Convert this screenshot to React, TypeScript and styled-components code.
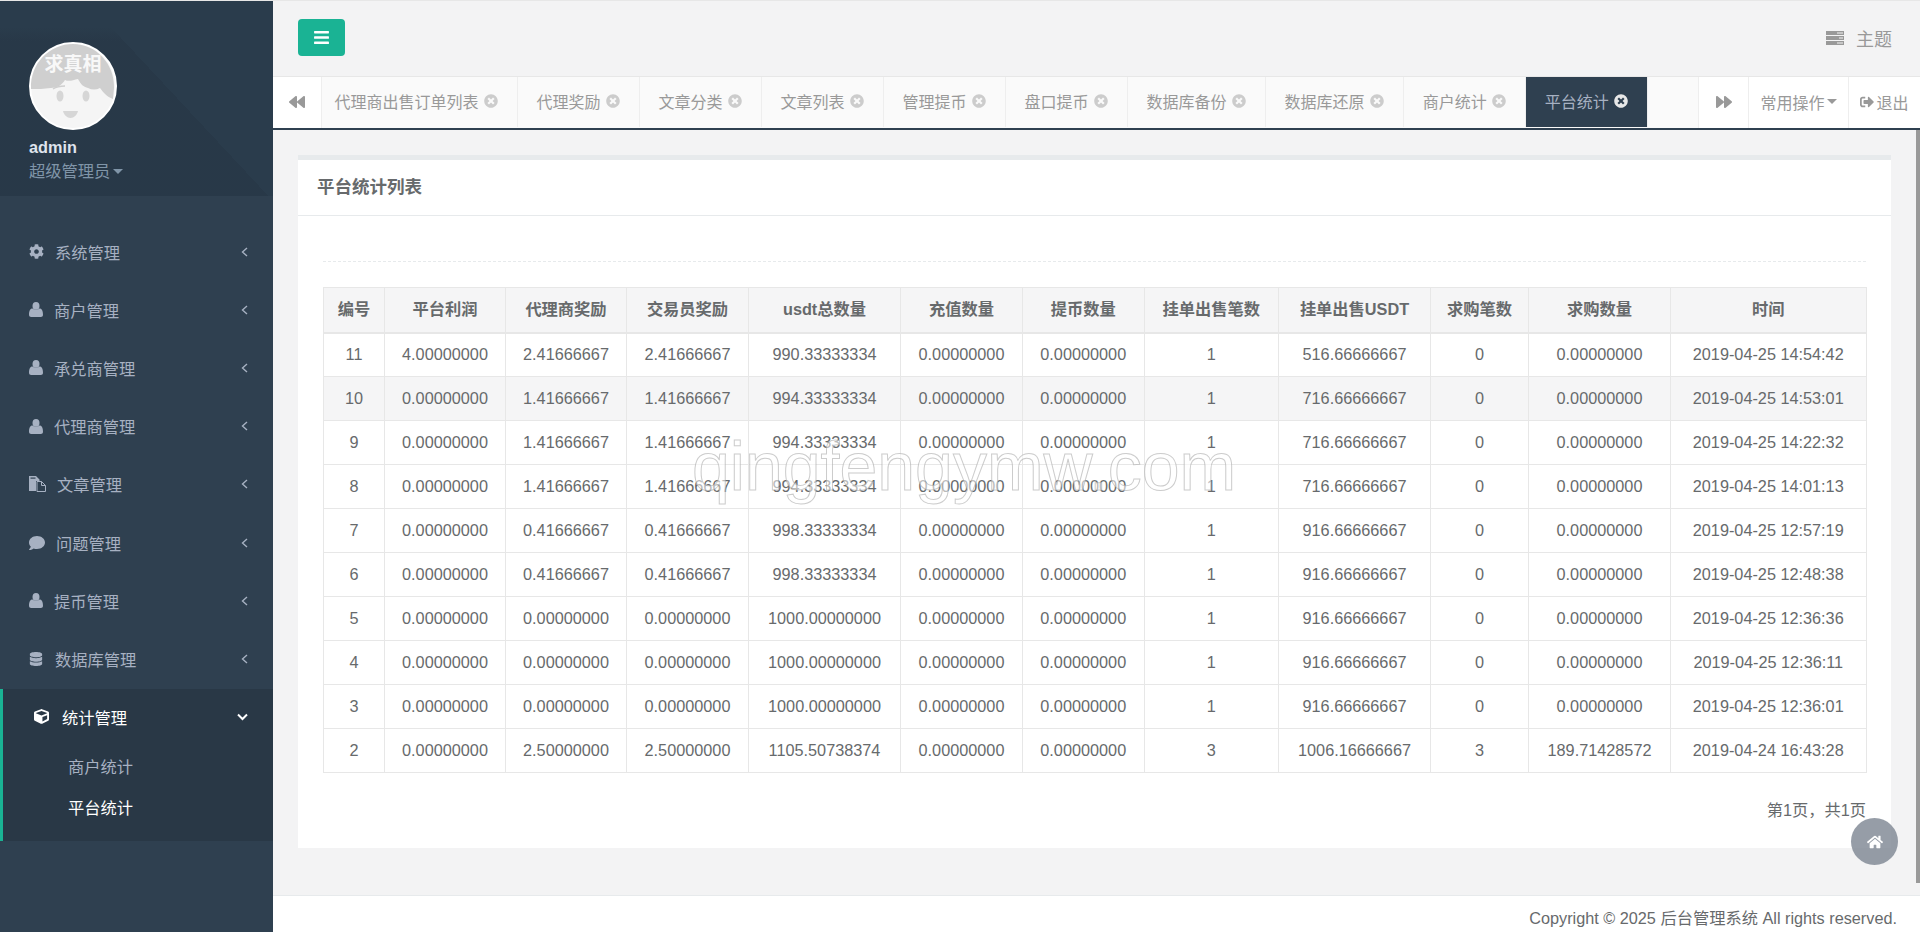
import styled, { createGlobalStyle } from 'styled-components';
import {
  FaBackward,
  FaBars,
  FaCog,
  FaComment,
  FaCube,
  FaDatabase,
  FaForward,
  FaHome,
  FaSignOutAlt,
  FaTimesCircle,
} from 'react-icons/fa';
import type { ComponentType } from 'react';

const GlobalStyle = createGlobalStyle`
  * { box-sizing: border-box; }
  html, body { margin: 0; padding: 0; height: 100%; overflow: hidden; }
  body {
    font-family: "Liberation Sans", "Noto Sans CJK SC", sans-serif;
    font-size: 16.25px;
    color: #676a6c;
    background: #f3f3f4;
  }
`;

const Shell = styled.div`
  position: relative;
  display: flex;
  width: 1920px;
  height: 932px;
  overflow: hidden;
  border-top: 1px solid #e7e7e7;
`;

/* sidebar */
const Sidebar = styled.nav`
  flex: 0 0 273px;
  background: #2f4050;
`;

const NavHeader = styled.div`
  height: 195px;
  padding: 41px 0 0 29px;
  background:
    linear-gradient(180deg, #2a3c4c 0 26px, rgba(42, 60, 76, 0) 40px),
    linear-gradient(227deg, transparent 0 41%, rgba(0, 0, 0, 0.06) 41% 100%),
    #2a3c4c;
`;

const Avatar = styled.svg`
  display: block;
  width: 88px;
  height: 88px;
`;

const UserName = styled.div`
  margin-top: 7px;
  font-weight: 700;
  line-height: 20px;
  color: #dfe4ed;
`;

const UserRole = styled.div`
  display: flex;
  align-items: center;
  gap: 3px;
  margin-top: 2px;
  line-height: 24px;
  color: #8095a8;
`;

const Caret = styled.i<{ $color: string }>`
  width: 0;
  height: 0;
  border-left: 5px solid transparent;
  border-right: 5px solid transparent;
  border-top: 5px solid ${({ $color }) => $color};
`;

const Menu = styled.ul`
  list-style: none;
  margin: 0;
  padding: 27px 0 0;
`;

const MenuRow = styled.li`
  display: flex;
  align-items: center;
  height: 58.2px;
  padding: 0 25px 1px 29px;
  color: #a7b1c2;
  svg { flex: none; }
`;

const MenuLabel = styled.span<{ $gap: number }>`
  flex: 1;
  margin-left: ${({ $gap }) => $gap}px;
`;

const ActiveGroup = styled.li`
  height: 152px;
  background: #293846;
  border-left: 3px solid #1ab394;
`;

const ActiveHead = styled.div`
  display: flex;
  align-items: center;
  height: 58px;
  padding: 0 25px 2px 31px;
  color: #fff;
`;

const SubMenu = styled.ul`
  list-style: none;
  margin: 0;
  padding: 0 0 0 65px;
`;

const SubItem = styled.li<{ $active?: boolean }>`
  height: 41px;
  line-height: 41px;
  color: ${({ $active }) => ($active ? '#fff' : '#a7b1c2')};
`;

/* main column */
const Main = styled.div`
  flex: 1;
  min-width: 0;
  display: flex;
  flex-direction: column;
`;

const TopBar = styled.header`
  flex: 0 0 75px;
  display: flex;
  align-items: flex-start;
  justify-content: space-between;
  padding: 18px 28px 0 25px;
`;

const MenuToggle = styled.button`
  display: flex;
  align-items: center;
  justify-content: center;
  width: 47px;
  height: 37px;
  border: 0;
  border-radius: 4px;
  background: #1ab394;
  color: #fff;
  font-size: 17px;
`;

const ThemeLink = styled.div`
  display: flex;
  align-items: center;
  gap: 12px;
  height: 37px;
  font-size: 18px;
  color: #999;
`;

const TabBar = styled.div`
  flex: 0 0 54px;
  display: flex;
  font-size: 16px;
  background: #fafafa;
  border-top: 1px solid #e7e7e7;
  border-bottom: 2px solid #2f4050;
`;

const SideButton = styled.div<{ $width: number }>`
  flex: 0 0 ${({ $width }) => $width}px;
  display: flex;
  align-items: center;
  justify-content: center;
  gap: 2px;
  background: #fff;
  color: #999;
  border-left: 1px solid #eee;
  padding-bottom: 2px;
  &:first-child { border-left: 0; border-right: 1px solid #eee; }
`;

const TabStrip = styled.div`
  flex: 1;
  display: flex;
  min-width: 0;
  overflow: hidden;
`;

const Tab = styled.div<{ $active?: boolean; $clip?: number }>`
  flex: none;
  display: flex;
  align-items: center;
  gap: 5px;
  height: 50px;
  padding: 0 19px 2px ${({ $clip }) => 19 - ($clip ?? 0)}px;
  border-right: 1px solid #eee;
  background: ${({ $active }) => ($active ? '#2f4050' : 'transparent')};
  color: ${({ $active }) => ($active ? '#a7b1c2' : '#999')};
  svg { color: ${({ $active }) => ($active ? '#e8e8e8' : '#ccc')}; }
`;

const Content = styled.main`
  flex: 1;
  min-height: 0;
  padding: 25px 29px 0 25px;
`;

const Card = styled.section`
  height: 693px;
  background: #fff;
  border-top: 5px solid #e7eaec;
`;

const CardTitle = styled.h5`
  margin: 0;
  height: 56px;
  padding: 0 19px;
  line-height: 54px;
  font-size: 17.5px;
  font-weight: 700;
  color: #676a6c;
  border-bottom: 1px solid #e7eaec;
`;

const CardBody = styled.div`
  padding: 45px 25px 0 25px;
`;

const DashedRule = styled.div`
  height: 1px;
  margin-bottom: 25px;
  border-top: 1px dashed #e7eaec;
`;

const Table = styled.table`
  width: 1543px;
  table-layout: fixed;
  border-collapse: collapse;
  text-align: center;
`;

const HeadCell = styled.th`
  height: 45px;
  padding: 0 0 4px;
  font-weight: 700;
  background: #f5f5f6;
  border: 1px solid #e7e7e7;
  border-bottom-width: 2px;
`;

const Row = styled.tr<{ $striped: boolean }>`
  background: ${({ $striped }) => ($striped ? '#f5f5f6' : '#fff')};
`;

const Cell = styled.td`
  height: 44px;
  padding: 0;
  border: 1px solid #e7e7e7;
`;

const PageInfo = styled.div`
  margin-top: 25px;
  line-height: 24px;
  text-align: right;
`;

const Footer = styled.footer`
  flex: 0 0 37px;
  padding: 10px 23px 0 0;
  background: #fff;
  border-top: 1px solid #e7eaec;
  line-height: 24px;
  text-align: right;
`;

/* overlays */
const ScrollThumb = styled.div`
  position: absolute;
  top: 129px;
  right: 0;
  width: 4px;
  height: 753px;
  background: #999;
`;

const HomeButton = styled.div`
  position: absolute;
  top: 817px;
  left: 1851px;
  width: 47px;
  height: 47px;
  display: flex;
  align-items: center;
  justify-content: center;
  border-radius: 50%;
  background: rgba(120, 130, 142, 0.78);
  color: #fff;
  font-size: 16px;
`;

const Watermark = styled.div`
  position: absolute;
  top: 427px;
  left: 692px;
  font-size: 68px;
  line-height: 76px;
  white-space: nowrap;
  pointer-events: none;
  color: rgba(255, 255, 255, 0.55);
  -webkit-text-stroke: 1px rgba(170, 170, 170, 0.6);
`;

function UserIcon() {
  return (
    <svg width="14" height="15" viewBox="0 0 14 15" fill="currentColor">
      <ellipse cx="7" cy="3.9" rx="3.5" ry="3.9" />
      <path d="M0 12.8c0-3.6 1-6.3 3.5-6.3 1 .8 2.2 1.2 3.5 1.2s2.5-.4 3.5-1.2c2.5 0 3.5 2.7 3.5 6.3 0 1.4-1 2.2-2.1 2.2H2.100C1 15 0 14.200 0 12.800z" />
    </svg>
  );
}

function FilesIcon() {
  return (
    <svg width="17" height="16" viewBox="0 0 17 16" fill="currentColor">
      <path d="M0 0h7l3.500 3.500V5H7v10H0z" />
      <path d="M1.500 1.500h5v1.200h-5z" fill="#2f4050" />
      <path d="M8 5.500h4.500l4 4v6h-8.500z" fill="none" stroke="currentColor" />
      <path d="M12.500 5.500v4h4" fill="none" stroke="currentColor" />
    </svg>
  );
}

function CogIcon() {
  return <FaCog size={15} />;
}

function CommentIcon() {
  return <FaComment size={16} />;
}

function DatabaseIcon() {
  return <FaDatabase size={14} />;
}

function ChevronLeft() {
  return (
    <svg width="7" height="10" viewBox="0 0 7 10" fill="none" stroke="currentColor" strokeWidth="1.4">
      <path d="M6 1 1.500 5 6 9" />
    </svg>
  );
}

function ChevronDown() {
  return (
    <svg width="11" height="8" viewBox="0 0 11 8" fill="none" stroke="currentColor" strokeWidth="2">
      <path d="M1 1.500 5.500 6 10 1.500" />
    </svg>
  );
}

interface MenuEntry {
  label: string;
  icon: ComponentType;
  gap: number;
}

const menuEntries: MenuEntry[] = [
  { label: '系统管理', icon: CogIcon, gap: 11 },
  { label: '商户管理', icon: UserIcon, gap: 11 },
  { label: '承兑商管理', icon: UserIcon, gap: 11 },
  { label: '代理商管理', icon: UserIcon, gap: 11 },
  { label: '文章管理', icon: FilesIcon, gap: 11 },
  { label: '问题管理', icon: CommentIcon, gap: 11 },
  { label: '提币管理', icon: UserIcon, gap: 11 },
  { label: '数据库管理', icon: DatabaseIcon, gap: 12 },
];

const tabs = ['代理奖励', '文章分类', '文章列表', '管理提币', '盘口提币', '数据库备份', '数据库还原', '商户统计'];

const columns: [string, number][] = [
  ['编号', 61],
  ['平台利润', 121],
  ['代理商奖励', 121],
  ['交易员奖励', 122],
  ['usdt总数量', 152],
  ['充值数量', 122],
  ['提币数量', 121.5],
  ['挂单出售笔数', 134.5],
  ['挂单出售USDT', 152],
  ['求购笔数', 98],
  ['求购数量', 142],
  ['时间', 195.5],
];

const zero = '0.00000000';

const rows: string[][] = [
  ['11', '4.00000000', '2.41666667', '2.41666667', '990.33333334', zero, zero, '1', '516.66666667', '0', zero, '2019-04-25 14:54:42'],
  ['10', zero, '1.41666667', '1.41666667', '994.33333334', zero, zero, '1', '716.66666667', '0', zero, '2019-04-25 14:53:01'],
  ['9', zero, '1.41666667', '1.41666667', '994.33333334', zero, zero, '1', '716.66666667', '0', zero, '2019-04-25 14:22:32'],
  ['8', zero, '1.41666667', '1.41666667', '994.33333334', zero, zero, '1', '716.66666667', '0', zero, '2019-04-25 14:01:13'],
  ['7', zero, '0.41666667', '0.41666667', '998.33333334', zero, zero, '1', '916.66666667', '0', zero, '2019-04-25 12:57:19'],
  ['6', zero, '0.41666667', '0.41666667', '998.33333334', zero, zero, '1', '916.66666667', '0', zero, '2019-04-25 12:48:38'],
  ['5', zero, zero, zero, '1000.00000000', zero, zero, '1', '916.66666667', '0', zero, '2019-04-25 12:36:36'],
  ['4', zero, zero, zero, '1000.00000000', zero, zero, '1', '916.66666667', '0', zero, '2019-04-25 12:36:11'],
  ['3', zero, zero, zero, '1000.00000000', zero, zero, '1', '916.66666667', '0', zero, '2019-04-25 12:36:01'],
  ['2', zero, '2.50000000', '2.50000000', '1105.50738374', zero, zero, '3', '1006.16666667', '3', '189.71428572', '2019-04-24 16:43:28'],
];

function AvatarImage() {
  return (
    <Avatar viewBox="0 0 88 88">
      <circle cx="44" cy="44" r="43" fill="#f5f5f5" stroke="#fff" strokeWidth="2" />
      <path
        d="M2 47C1 21 21 2 44 2s42 20 41 44l-1 11c-6-2-10-7-13-11-4 2-8 2-12 0-4-1-7-3-10-9-5 1-9 3-13 1-3 5-8 8-14 8-4 0-7 1-10 1z"
        fill="#cfcfcf"
      />
      <path d="M24 47c3-2 7-3 12-3" fill="none" stroke="#cfcfcf" strokeWidth="1.500" />
      <ellipse cx="31" cy="54" rx="3.500" ry="5.500" fill="#d6d6d6" />
      <ellipse cx="57" cy="54" rx="3.500" ry="5.500" fill="#d6d6d6" />
      <path d="M34 69h15c-1 4-4 7-7.500 7S35 73 34 69z" fill="#d6d6d6" />
      <text
        x="44"
        y="29"
        textAnchor="middle"
        fill="#f8f8f8"
        fontSize="19"
        fontWeight="700"
        fontFamily="'Noto Sans CJK SC', sans-serif"
      >
        求真相
      </text>
    </Avatar>
  );
}

function ThemeIcon() {
  return (
    <svg width="18" height="14" viewBox="0 0 18 14" fill="#999">
      <path d="M0 0h18v4H0zM0 5h18v4H0zM0 10h18v4H0z" />
      <path d="M11 1.500h6v1h-6zM13 6.500h4v1h-4zM11 11.500h6v1h-6z" fill="#f3f3f4" />
    </svg>
  );
}

export default function App() {
  return (
    <>
      <GlobalStyle />
      <Shell>
        <Sidebar>
          <NavHeader>
            <AvatarImage />
            <UserName>admin</UserName>
            <UserRole>
              超级管理员
              <Caret $color="#8095a8" />
            </UserRole>
          </NavHeader>
          <Menu>
            {menuEntries.map(({ label, icon: Icon, gap }) => (
              <MenuRow key={label}>
                <Icon />
                <MenuLabel $gap={gap}>{label}</MenuLabel>
                <ChevronLeft />
              </MenuRow>
            ))}
            <ActiveGroup>
              <ActiveHead>
                <FaCube size={15} />
                <MenuLabel $gap={13}>统计管理</MenuLabel>
                <ChevronDown />
              </ActiveHead>
              <SubMenu>
                <SubItem>商户统计</SubItem>
                <SubItem $active>平台统计</SubItem>
              </SubMenu>
            </ActiveGroup>
          </Menu>
        </Sidebar>

        <Main>
          <TopBar>
            <MenuToggle>
              <FaBars />
            </MenuToggle>
            <ThemeLink>
              <ThemeIcon />
              主题
            </ThemeLink>
          </TopBar>

          <TabBar>
            <SideButton $width={49}>
              <FaBackward size={16} />
            </SideButton>
            <TabStrip>
              <Tab $clip={6.5}>
                代理商出售订单列表
                <FaTimesCircle size={14} />
              </Tab>
              {tabs.map((tab) => (
                <Tab key={tab}>
                  {tab}
                  <FaTimesCircle size={14} />
                </Tab>
              ))}
              <Tab $active>
                平台统计
                <FaTimesCircle size={14} />
              </Tab>
            </TabStrip>
            <SideButton $width={50}>
              <FaForward size={16} />
            </SideButton>
            <SideButton $width={100}>
              常用操作
              <Caret $color="#999" />
            </SideButton>
            <SideButton $width={72}>
              <FaSignOutAlt size={14} />
              退出
            </SideButton>
          </TabBar>

          <Content>
            <Card>
              <CardTitle>平台统计列表</CardTitle>
              <CardBody>
                <DashedRule />
                <Table>
                  <colgroup>
                    {columns.map(([name, width]) => (
                      <col key={name} width={width} />
                    ))}
                  </colgroup>
                  <thead>
                    <tr>
                      {columns.map(([name]) => (
                        <HeadCell key={name}>{name}</HeadCell>
                      ))}
                    </tr>
                  </thead>
                  <tbody>
                    {rows.map((row, i) => (
                      <Row key={row[0]} $striped={i === 1}>
                        {row.map((value, j) => (
                          <Cell key={j}>{value}</Cell>
                        ))}
                      </Row>
                    ))}
                  </tbody>
                </Table>
                <PageInfo>第1页，共1页</PageInfo>
              </CardBody>
            </Card>
          </Content>

          <Footer>Copyright © 2025 后台管理系统 All rights reserved.</Footer>
        </Main>

        <ScrollThumb />
        <HomeButton>
          <FaHome />
        </HomeButton>
        <Watermark>qingfengymw.com</Watermark>
      </Shell>
    </>
  );
}
